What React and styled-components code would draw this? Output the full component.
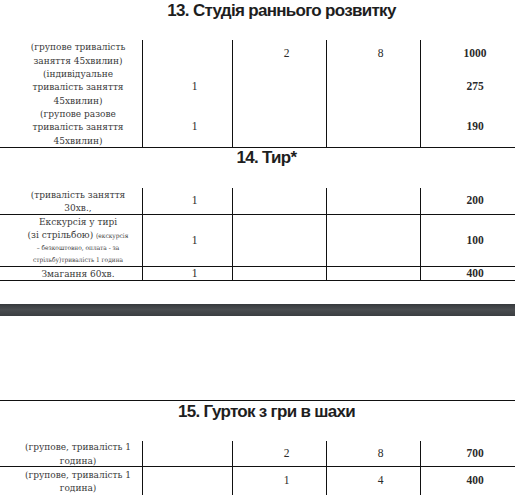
import styled, { createGlobalStyle } from 'styled-components';

const GlobalStyle = createGlobalStyle`
  html, body {
    margin: 0;
    padding: 0;
    background: #fff;
  }
`;

const Page = styled.div`
  width: 515px;
  height: 495px;
  overflow: hidden;
  background: #fff;
  display: flex;
  flex-direction: column;
`;

const Section = styled.section`
  display: flex;
  flex-direction: column;
  border-top: ${(p) => (p.$topLine ? '1.5px solid #111' : 'none')};
  border-bottom: ${(p) => (p.$bottomLine ? '1.5px solid #111' : 'none')};
`;

const Title = styled.h2`
  margin: 0;
  height: ${(p) => p.$height}px;
  padding-left: ${(p) => p.$shift}px;
  padding-top: ${(p) => p.$top}px;
  box-sizing: border-box;
  text-align: center;
  font-family: 'Liberation Sans Narrow', 'Arial Narrow', 'Liberation Sans', Arial, sans-serif;
  font-weight: bold;
  font-size: 17px;
  letter-spacing: -0.7px;
  line-height: 20px;
  color: #1e1e1e;
`;

const Table = styled.div`
  display: grid;
  grid-template-columns: 143px 90px 94px 94px 94px;
`;

const Cell = styled.div`
  height: ${(p) => p.$h}px;
  box-sizing: border-box;
  display: flex;
  flex-direction: column;
  align-items: center;
  justify-content: center;
  padding-left: 14px;
  text-align: center;
  font-family: 'Liberation Serif', 'Times New Roman', serif;
  font-size: 11.5px;
  line-height: 13.5px;
  color: #2a2a2a;
  font-weight: ${(p) => (p.$bold ? 'bold' : 'normal')};
  border-right: ${(p) => (p.$last ? 'none' : '1px solid #111')};
  border-bottom: ${(p) => (p.$lined ? '1px solid #111' : 'none')};
`;

const Label = styled.span`
  display: flex;
  flex-direction: column;
  align-items: center;
  font-family: 'DejaVu Serif', 'Liberation Serif', serif;
  font-stretch: condensed;
  font-size: 10px;
  line-height: 13.5px;
  color: #3a3a3a;
  white-space: nowrap;
`;

const Small = styled.span`
  font-size: 6.5px;
  line-height: 12px;
`;

const Divider = styled.div`
  margin-top: 23px;
  height: 12px;
  background: linear-gradient(#36393c, #4a4d50 45%, #3b3e41);
`;

const Gap = styled.div`
  height: ${(p) => p.$h}px;
`;

const Row = ({ h, lined, label, a, b, c, price }) => (
  <>
    <Cell $h={h} $lined={lined}>
      <Label>{label}</Label>
    </Cell>
    <Cell $h={h} $lined={lined}>{a}</Cell>
    <Cell $h={h} $lined={lined}>{b}</Cell>
    <Cell $h={h} $lined={lined}>{c}</Cell>
    <Cell $h={h} $lined={lined} $last $bold>{price}</Cell>
  </>
);

const App = () => {
  return (
    <Page>
      <GlobalStyle />

      <Section $bottomLine>
        <Title $height={40} $shift={48} $top={1}>13. Студія раннього розвитку</Title>
        <Table>
          <Row h={27} label={<><span>(групове тривалість</span><span>заняття 45хвилин)</span></>} b="2" c="8" price="1000" />
          <Row h={40} label={<><span>(індивідуальне</span><span>тривалість заняття</span><span>45хвилин)</span></>} a="1" price="275" />
          <Row h={40} label={<><span>(групове разове</span><span>тривалість заняття</span><span>45хвилин)</span></>} a="1" price="190" />
        </Table>
      </Section>

      <Section $bottomLine>
        <Title $height={40} $shift={18} $top={0}>14. Тир*</Title>
        <Table>
          <Row h={27} lined label={<><span>(тривалість заняття</span><span>30хв.,</span></>} a="1" price="200" />
          <Row
            h={52}
            lined
            label={
              <>
                <span>Екскурсія у тирі</span>
                <span>
                  (зі стрільбою) <Small>(екскурсія</Small>
                </span>
                <Small>– безкоштовно, оплата - за</Small>
                <Small>стрільбу)тривалість 1 година</Small>
              </>
            }
            a="1"
            price="100"
          />
          <Row h={13} label="Змагання 60хв." a="1" price="400" />
        </Table>
      </Section>

      <Divider />
      <Gap $h={84} />

      <Section $topLine>
        <Title $height={40} $shift={18} $top={1}>15. Гурток з гри в шахи</Title>
        <Table>
          <Row h={26} lined label={<><span>(групове, тривалість 1</span><span>година)</span></>} b="2" c="8" price="700" />
          <Row h={28} label={<><span>(групове, тривалість 1</span><span>година)</span></>} b="1" c="4" price="400" />
        </Table>
      </Section>
    </Page>
  );
};

export default App;
